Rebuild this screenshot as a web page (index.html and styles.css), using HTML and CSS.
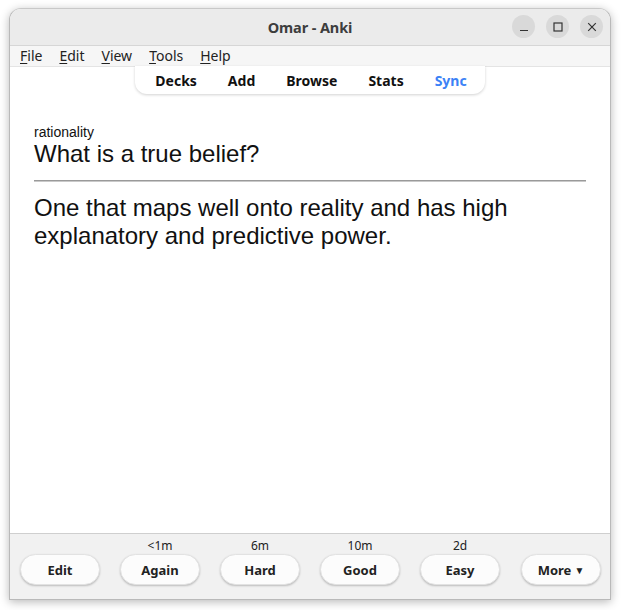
FILE: index.html
```html
<!DOCTYPE html>
<html>
<head>
<meta charset="utf-8">
<link rel="stylesheet" href="styles.css">
</head>
<body>
<div class="window">
  <div class="titlebar">
    <div class="title">Omar - Anki</div>
    <div class="wbtns">
      <span class="wbtn"><svg width="10" height="10" viewBox="0 0 10 10"><path d="M1 8.5h8" stroke="#333" stroke-width="1.2"/></svg></span>
      <span class="wbtn"><svg width="10" height="10" viewBox="0 0 10 10"><rect x="1" y="1" width="8" height="8" fill="none" stroke="#333" stroke-width="1.2"/></svg></span>
      <span class="wbtn"><svg width="10" height="10" viewBox="0 0 10 10"><path d="M1.2 1.2l7.6 7.6M8.8 1.2l-7.6 7.6" stroke="#333" stroke-width="1.2"/></svg></span>
    </div>
  </div>
  <div class="menubar">
    <span class="mi"><u>F</u>ile</span>
    <span class="mi"><u>E</u>dit</span>
    <span class="mi"><u>V</u>iew</span>
    <span class="mi"><u>T</u>ools</span>
    <span class="mi"><u>H</u>elp</span>
  </div>
  <div class="main">
    <div class="toolbar-wrap">
      <div class="toolbar">
        <span class="tb">Decks</span>
        <span class="tb">Add</span>
        <span class="tb">Browse</span>
        <span class="tb">Stats</span>
        <span class="tb sync">Sync</span>
      </div>
    </div>
    <div class="card">
      <div class="deck">rationality</div>
      <div class="q">What is a true belief?</div>
      <hr class="sep">
      <div class="a">One that maps well onto reality and has high explanatory and predictive power.</div>
    </div>
  </div>
  <div class="bottombar">
    <div class="bcol"><div class="lbl"></div><div class="btn">Edit</div></div>
    <div class="bcol"><div class="lbl">&lt;1m</div><div class="btn">Again</div></div>
    <div class="bcol"><div class="lbl">6m</div><div class="btn">Hard</div></div>
    <div class="bcol"><div class="lbl">10m</div><div class="btn">Good</div></div>
    <div class="bcol"><div class="lbl">2d</div><div class="btn">Easy</div></div>
    <div class="spacer"></div>
    <div class="bcol"><div class="lbl"></div><div class="btn">More <span class="tri">▼</span></div></div>
  </div>
</div>
</body>
</html>
```
FILE: styles.css
```css
html, body { margin: 0; padding: 0; }
body {
  background: #ffffff;
  width: 621px;
  height: 610px;
  overflow: hidden;
  padding: 8px 0 0 9px;
  box-sizing: border-box;
  font-family: "Noto Sans", "Open Sans", sans-serif;
}
.window {
  width: 602px;
  height: 592px;
  box-sizing: border-box;
  border: 1px solid #b9b9b9;
  border-top-color: #c8c8c8;
  border-radius: 12px 12px 0 0;
  box-shadow: 0 2px 10px rgba(0,0,0,0.28);
  display: flex;
  flex-direction: column;
  overflow: hidden;
  background: #fff;
}
.titlebar {
  height: 36px;
  flex: none;
  background: #ebebeb;
  border-bottom: 1px solid #d6d6d6;
  position: relative;
  display: flex;
  align-items: center;
  justify-content: center;
}
.title {
  font-weight: 700;
  font-size: 14.5px;
  color: #3d3d3d;
  letter-spacing: -0.1px;
}
.wbtns {
  position: absolute;
  right: 7px;
  top: 6px;
  display: flex;
  gap: 11px;
}
.wbtn {
  width: 23px;
  height: 23px;
  border-radius: 50%;
  background: #d9d9d9;
  display: flex;
  align-items: center;
  justify-content: center;
}
.menubar {
  height: 20px;
  flex: none;
  background: #f6f6f6;
  border-bottom: 1px solid #e4e4e4;
  display: flex;
  align-items: center;
  padding-left: 10px;
  font-size: 14px;
  color: #222;
}
.mi { margin-right: 17px; line-height: 20px; }
.mi u { text-decoration-thickness: 1px; text-underline-offset: 2px; }
.main {
  flex: 1;
  background: #fff;
  display: flex;
  flex-direction: column;
}
.toolbar-wrap { display: flex; justify-content: center; }
.toolbar {
  width: 350px;
  height: 28px;
  box-sizing: border-box;
  margin-left: 0;
  margin-top: -1px;
  border-radius: 0 0 12px 12px;
  background: #fff;
  box-shadow: 0 1px 3px rgba(0,0,0,0.18);
  display: flex;
  justify-content: center;
  align-items: center;
  gap: 31px;
  padding-left: 2px;
}
.tb {
  font-weight: 700;
  font-size: 14px;
  color: #111;
}
.tb.sync { color: #3b82f6; }
.card {
  padding: 30px 24px 0 24px;
  font-family: "Liberation Sans", Arial, sans-serif;
  color: #111;
}
.deck { font-size: 14px; line-height: 16px; }
.q { font-size: 24px; line-height: 28px; margin-top: 0; }
.sep {
  margin: 12px 0 12px 0;
  border: 0;
  border-top: 1px solid #9a9a9a;
  border-bottom: 1px solid #c9c9c9;
  height: 0;
}
.a { font-size: 24px; line-height: 28px; }
.bottombar {
  height: 66px;
  flex: none;
  box-sizing: border-box;
  background: #f1f1f1;
  border-top: 1px solid #cfcfcf;
  display: flex;
  padding: 3px 9px 0 10px;
  gap: 20px;
}
.spacer { flex: 1; margin-left: -19px; }
.bcol { display: flex; flex-direction: column; align-items: center; }
.lbl {
  height: 17px;
  line-height: 18px;
  font-size: 12px;
  color: #222;
}
.btn {
  width: 80px;
  height: 31px;
  box-sizing: border-box;
  border-radius: 16px;
  background: #fcfcfc;
  border: 1px solid #e2e2e2;
  box-shadow: 0 1px 2px rgba(0,0,0,0.22);
  display: flex;
  align-items: center;
  justify-content: center;
  font-weight: 700;
  font-size: 13px;
  color: #222;
}
.tri { font-size: 10px; margin-left: 3px; }
```
